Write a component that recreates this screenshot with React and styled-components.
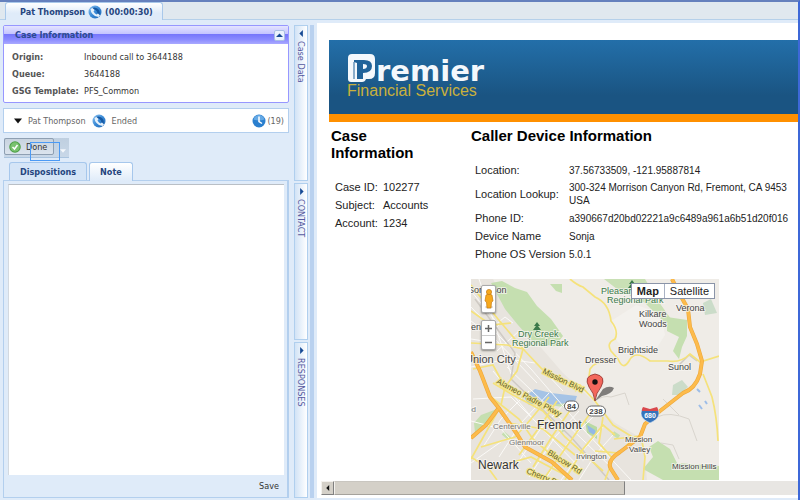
import * as React from "react";
import styled, { createGlobalStyle } from "styled-components";

const GlobalStyle = createGlobalStyle`
  * {
    box-sizing: border-box;
  }
  body {
    margin: 0;
    background: #dfebf9;
    font: 9px/12px "DejaVu Sans Condensed", "DejaVu Sans", sans-serif;
    color: #333333;
  }
  button, textarea {
    font: inherit;
    color: inherit;
    padding: 0;
    border: 0;
    margin: 0;
    background: transparent;
  }
  svg {
    display: block;
  }
`;

const Shell = styled.div`
  display: flex;
  flex-direction: column;
  min-height: 100vh;
  border-top: 2px solid #6580bd;
  border-right: 2px solid #3d68d8;
`;

const SessionBar = styled.header`
  height: 18px;
  padding-left: 5px;
  background: #e0e8ef;
  border-bottom: 1px solid #b5d0ea;
`;

const SessionTab = styled.button`
  display: flex;
  align-items: center;
  gap: 3px;
  height: 18px;
  padding: 0 9px 0 14px;
  border: 1px solid #a9c8ea;
  border-bottom: 0;
  border-radius: 3px 3px 0 0;
  background: linear-gradient(#ffffff, #dfebf9 60%);
  color: #26457f;
  font-weight: bold;
`;

const Workspace = styled.div`
  flex: 1;
  display: grid;
  grid-template-columns: 286px 14px 4px minmax(0, 1fr);
  padding: 5px 0 2px 3px;
`;

const Sidebar = styled.aside`
  display: flex;
  flex-direction: column;
`;

const CasePanel = styled.section`
  min-height: 78px;
  border: 1px solid #9797ff;
  border-radius: 2px;
  background: #ffffff;
`;

const CaseHeader = styled.div`
  display: flex;
  align-items: center;
  justify-content: space-between;
  height: 18px;
  padding: 0 3px 0 11px;
  background: linear-gradient(#e4e4ff, #c4c4ff 44%, #7676fb 46%, #8b8bff 75%, #a9a9ff);
`;

const PanelTitle = styled.h2`
  margin: 0;
  font: inherit;
  font-weight: bold;
  color: #2c4a90;
`;

const CollapseButton = styled.button`
  display: flex;
  align-items: center;
  justify-content: center;
  width: 11px;
  height: 11px;
  border: 1px solid #a9bfe4;
  border-radius: 2px;
  background: #eaf2fd;
`;

const CaseFields = styled.table`
  margin: 4px 0 0 8px;
  border-collapse: collapse;
  th {
    width: 72px;
    padding: 0;
    height: 17px;
    text-align: left;
    white-space: nowrap;
    color: #555555;
  }
  td {
    padding: 0;
  }
`;

const CallRow = styled.section`
  display: flex;
  align-items: center;
  gap: 6px;
  height: 25px;
  margin-top: 5px;
  padding: 0 4px 0 10px;
  border: 1px solid #b3cfee;
  background: #ffffff;
  color: #666666;
`;

const CallCount = styled.span`
  display: flex;
  align-items: center;
  gap: 1px;
  margin-left: auto;
`;

const Toolbar = styled.div`
  display: flex;
  align-self: flex-start;
  width: 65px;
  height: 20px;
  margin: 5px 0 0 1px;
  background: linear-gradient(#bfcfe0, #c9d8e8);
  border-bottom: 1px solid #aac4df;
`;

const DoneButton = styled.button`
  position: relative;
  display: flex;
  align-items: center;
  gap: 5px;
  width: 50px;
  height: 17px;
  padding-left: 4px;
  border: 1px solid #8e9fb2;
  border-radius: 2px;
  background: linear-gradient(#c8d3df, #dbe4ee);
  &::after {
    content: "";
    position: absolute;
    top: 3px;
    left: 25px;
    width: 28px;
    height: 17px;
    border: 1px solid #4b9af5;
  }
`;

const ToolbarMore = styled.button`
  align-self: flex-end;
  margin: 0 0 3px 6px;
`;

const TabStrip = styled.div`
  display: flex;
  align-items: flex-end;
  gap: 2px;
  height: 19px;
  margin: 4px 0 -1px;
  padding-left: 6px;
`;

const TabButton = styled.button`
  position: relative;
  height: ${(props) => (props.$active ? 19 : 18)}px;
  margin-bottom: ${(props) => (props.$active ? 0 : 1)}px;
  padding: 0 10px;
  border: 1px solid #a6c7ec;
  border-bottom: 0;
  border-radius: 3px 3px 0 0;
  background: ${(props) =>
    props.$active ? "linear-gradient(#ffffff, #dfebf9)" : "#d5e5f7"};
  color: #26457f;
  font-weight: bold;
`;

const NotePanel = styled.section`
  flex: 1;
  display: flex;
  flex-direction: column;
  padding: 3px 3px 1px 4px;
  border: 1px solid #b3cfee;
  border-width: 1px 2px 1px 1px;
`;

const NoteText = styled.textarea`
  flex: 1;
  width: 100%;
  resize: none;
  border-top: 1px solid #b9bfc6;
  border-left: 1px solid #d3d9e0;
  background: #ffffff;
`;

const SaveButton = styled.button`
  align-self: flex-end;
  height: 21px;
  padding: 0 5px;
`;

const Rail = styled.nav`
  display: grid;
  grid-template-rows: 1fr 1fr 1fr;
  gap: 2px;
  margin-left: 5px;
  width: 14px;
`;

const RailSection = styled.button`
  display: flex;
  flex-direction: column;
  align-items: center;
  gap: 4px;
  padding-top: 4px;
  border: 1px solid #b0cfee;
  background: linear-gradient(90deg, #d2e3f6, #ffffff);
  color: #55599f;
  span {
    writing-mode: vertical-rl;
    line-height: 10px;
  }
`;

const Splitter = styled.div`
  width: 4px;
  margin-left: 7px;
  background: #b9d1ef;
`;

const ContentPane = styled.main`
  display: flex;
  flex-direction: column;
  margin: -2px 0 0 10px;
  overflow: hidden;
  background: #ffffff;
  font-family: "Liberation Sans", Arial, sans-serif;
  color: #222222;
`;

const Banner = styled.div`
  height: 82px;
  margin: 17px 0 0 12px;
  padding: 14px 0 0 18px;
  background: linear-gradient(#236fa9, #1a5482 75%);
  border-bottom: 8px solid #ff9000;
`;

const Brand = styled.div`
  display: flex;
  align-items: flex-end;
  height: 29px;
  color: #f4f8fc;
  font: bold 29px/24px "DejaVu Sans", sans-serif;
  svg {
    align-self: flex-start;
  }
`;

const Tagline = styled.div`
  font-size: 16px;
  line-height: 15px;
  color: #c9b03c;
`;

const Details = styled.div`
  display: grid;
  grid-template-columns: 140px minmax(0, 1fr);
  padding: 5px 0 0 14px;
`;

const Heading = styled.h1`
  margin: 0;
  font-size: 15px;
  line-height: 17px;
  color: #000000;
`;

const InfoTable = styled.table`
  margin-top: 17px;
  border-collapse: collapse;
  white-space: nowrap;
  th {
    min-width: ${(props) => props.$label}px;
    height: 18px;
    padding: 0 0 0 4px;
    text-align: left;
    font-size: 11px;
    font-weight: normal;
  }
  td {
    padding: 2px 0;
    font-size: ${(props) => props.$size}px;
    line-height: 13px;
  }
`;

const MapFrame = styled.div`
  position: relative;
  width: 248px;
  margin-top: 16px;
`;

const MapControl = styled.div`
  position: absolute;
  top: ${(props) => props.$top}px;
  left: 10px;
  width: 15px;
  border: 1px solid #aaaaaa;
  border-radius: 2px;
  background: #ffffff;
  box-shadow: 0 1px 2px rgba(0, 0, 0, 0.4);
  button {
    display: flex;
    align-items: center;
    justify-content: center;
    width: 13px;
    height: ${(props) => props.$cell}px;
  }
  button + button {
    border-top: 1px solid #cccccc;
  }
`;

const MapTypes = styled.div`
  position: absolute;
  top: 4px;
  right: 4px;
  display: flex;
  border: 1px solid #8a94a8;
  background: #ffffff;
  font-size: 11px;
`;

const MapType = styled.button`
  height: 14px;
  padding: 0 5px;
  font-weight: ${(props) => (props.$active ? "bold" : "normal")};
  & + & {
    border-left: 1px solid #a9b2c4;
  }
`;

const Scroller = styled.div`
  display: flex;
  height: 14px;
  margin: auto 0 3px 4px;
  background: #e8e6e3;
`;

const ScrollArrow = styled.button`
  display: flex;
  align-items: center;
  justify-content: center;
  width: 13px;
  border: 1px solid #808080;
  border-color: #f4f2ee #808080 #808080 #f4f2ee;
  background: #d4d0c8;
`;

const ScrollThumb = styled.div`
  width: 61%;
  border: 1px solid #808080;
  border-color: #c9c6c0 #808080 #a5a29c #f4f2ee;
  background: #d4d0c8;
`;

const Triangle = ({ direction, size = 6, color = "#174a94" }) => {
  const shapes = {
    up: "M0 7L5 2L10 7Z",
    down: "M0 2L10 2L5 8Z",
    left: "M7 0L2 5L7 10Z",
    right: "M3 0L8 5L3 10Z",
  };
  return (
    <svg width={size} height={size} viewBox="0 0 10 10" aria-hidden="true">
      <path d={shapes[direction]} fill={color} />
    </svg>
  );
};

const PhoneIcon = () => (
  <svg width="14" height="14" viewBox="0 0 28 28" aria-hidden="true">
    <defs>
      <linearGradient id="ball" x1="0" y1="0" x2="1" y2="1">
        <stop offset="0" stopColor="#8fc4f0" />
        <stop offset="0.5" stopColor="#3a8ad6" />
        <stop offset="1" stopColor="#1b65b2" />
      </linearGradient>
    </defs>
    <circle cx="14" cy="14" r="13" fill="url(#ball)" />
    <path d="M8 6Q15 3 20 8Q25 13 23 20L19 17Q19 12 15 10Q11 9 8 6Z" fill="#1558a3" />
    <path d="M5 8L9 6L13 10L11 13Q13 17 17 19L20 17L24 21L21 24Q14 24 9 18Q5 13 5 8Z" fill="#e6f1fb" />
  </svg>
);

const ClockIcon = () => (
  <svg width="14" height="14" viewBox="0 0 28 28" aria-hidden="true">
    <circle cx="14" cy="14" r="13" fill="#2a7fce" />
    <path d="M3 11Q6 2 14 2Q22 2 25 11Q14 15 3 11Z" fill="#65a9e5" />
    <path d="M14 5V15L20 19" fill="none" stroke="#ffffff" strokeWidth="3" />
  </svg>
);

const CheckIcon = () => (
  <svg width="12" height="12" viewBox="0 0 24 24" aria-hidden="true">
    <circle cx="12" cy="12" r="11.5" fill="#4b9e45" />
    <circle cx="12" cy="12" r="9.5" fill="#79c26f" />
    <path d="M7 12L11 16L17 8" fill="none" stroke="#ffffff" strokeWidth="3" />
  </svg>
);

const PegmanIcon = () => (
  <svg width="10" height="22" viewBox="0 0 10 22" aria-hidden="true">
    <ellipse cx="5" cy="19" rx="4" ry="1.5" fill="#dddddd" />
    <path d="M2 7Q5 5 8 7L9 13L7.5 14L7 20H3L2.5 14L1 13Z" fill="#f7a91d" stroke="#c67b12" strokeWidth="0.7" />
    <circle cx="5" cy="4" r="2.6" fill="#f7a91d" stroke="#c67b12" strokeWidth="0.7" />
  </svg>
);

const ZoomIcon = ({ plus }) => (
  <svg width="7" height="7" viewBox="0 0 7 7" aria-hidden="true">
    <path d={plus ? "M0 3.5H7M3.5 0V7" : "M0 3.5H7"} stroke="#666666" strokeWidth="1.5" />
  </svg>
);

const BrandMark = () => (
  <svg width="29" height="28" viewBox="0 0 29 28" aria-hidden="true">
    <path d="M5 0H23Q28 0 28 5V19Q28 25 22 25H19Q18 28 15 28H4Q1 28 1 25V4Q1 0 5 0Z" fill="#f4f8fc" />
    <path d="M7 6H17Q25 6 25 12Q25 19 16 19V25H10V9L7 8Z" fill="#20639a" />
    <path d="M16 10Q20 10 20 12Q20 15 16 15Z" fill="#f4f8fc" />
    <path d="M7 8V25" stroke="#20639a" strokeWidth="1" />
  </svg>
);

const STREETS = [
  "M0 28L60 90L112 150L160 201",
  "M0 42L24 60L66 104",
  "M8 0L22 40L40 95",
  "M0 60L50 68L92 112",
  "M0 88L36 80L64 84",
  "M22 92L62 140L110 190",
  "M36 88L84 134L142 190",
  "M2 120L40 118L72 150",
  "M0 142L30 150L60 184",
  "M12 168L30 140L58 112",
  "M28 178L50 144L78 114",
  "M44 188L68 152L94 124",
  "M58 198L84 158L108 132",
  "M74 201L98 162L122 138",
  "M90 201L110 174L132 148",
  "M108 201L124 176L142 156",
  "M0 184L34 160L56 166",
  "M0 12L28 46L10 62",
  "M12 56L34 38L42 44",
  "M26 72L48 52",
];

const YELLOW_ROADS = [
  "M0 6L11 20L27 40L54 72L71 90L87 102L109 106L124 122L142 146L168 162",
  "M99 0Q106 6 112 8L124 18Q138 24 140 42Q148 52 144 60Q135 64 140 72L147 80Q152 92 158 82Q164 70 179 82L197 82Q210 84 219 75L229 83L248 77",
  "M118 98L119 90Q124 82 138 82",
  "M232 95Q238 110 241 118Q246 138 247 162",
  "M0 64L36 66L52 70L46 92L34 108L30 126",
  "M22 104L42 116L72 132L94 158L132 192",
  "M20 118L48 140L62 160L94 188",
  "M28 130L0 180",
  "M38 144L72 150L104 176",
  "M10 168L44 158L60 140L78 118",
  "M48 176L70 146L86 122",
  "M62 188L82 156L100 130",
  "M72 201L98 164L118 136",
  "M94 201L112 170L132 146L144 156",
  "M0 178L18 190L26 201M18 190L60 178L94 196",
  "M132 138L128 164L142 180L134 201",
  "M143 160L170 157L174 178L172 201",
  "M124 172L148 174L162 160",
  "M0 32L20 46L40 44M2 90L22 86L34 108",
];

const ORANGE_ROADS = [
  "M0 73L9 92L19 118L27 128L46 155L54 168L81 183L101 201",
  "M27 130L15 146L0 159",
  "M201 0L207 12L217 30L219 48L226 65L231 82L229 95Q224 110 212 114L189 132L174 145L169 158L149 173Q135 182 140 190L147 201",
];

// x, y, size, fill, text
const PLACES = [
  [-3, 14, 9, "#444444", "Sorenson"],
  [-5, 51, 9, "#444444", "pen"],
  [47, 58, 9, "#3b7a4a", "Dry Creek"],
  [41, 67, 9, "#3b7a4a", "Regional Park"],
  [-6, 84, 11, "#444444", "Union City"],
  [130, 15, 9, "#3b7a4a", "Pleasanton"],
  [136, 24, 9, "#3b7a4a", "Regional Park"],
  [205, 32, 9, "#444444", "Verona"],
  [168, 38, 9, "#444444", "Kilkare"],
  [168, 48, 9, "#444444", "Woods"],
  [147, 74, 9, "#444444", "Brightside"],
  [114, 84, 9, "#444444", "Dresser"],
  [197, 91, 9, "#444444", "Sunol"],
  [22, 150, 8, "#777777", "Centerville"],
  [38, 166, 8, "#777777", "Glenmoor"],
  [66, 150, 12, "#333333", "Fremont"],
  [7, 190, 12, "#333333", "Newark"],
  [105, 180, 8, "#555555", "Irvington"],
  [154, 163, 8, "#444444", "Mission"],
  [158, 173, 8, "#444444", "Valley"],
  [201, 190, 8, "#444444", "Mission Hills"],
  [-4, 133, 8, "#777777", "od"],
];

const ROAD_NAMES = [
  [71, 94, 26, "Mission Blvd"],
  [25, 104, 28, "Alameo Padre Pkwy"],
  [76, 175, 32, "Blacow Rd"],
  [55, 194, 22, "Cherry St"],
];

const StreetMap = () => (
  <svg
    width="100%"
    viewBox="0 0 248 201"
    role="img"
    aria-label="Street map of Fremont"
    fontFamily="Liberation Sans, Arial, sans-serif"
    fill="none"
  >
    <rect width="248" height="201" fill="#efece7" />
    <path d="M0 0H22L40 34L92 94L120 120L144 144L172 160L176 201H0Z" fill="#e8e4de" />
    <path d="M140 42L165 26L190 34L194 56L184 72L158 74L146 62Z" fill="#f3f1ed" />
    <path d="M20 4L31 2L44 9L56 13L66 27L80 40L92 57L84 67L64 65L47 46L34 30Z" fill="#c5dfb0" />
    <path d="M79 5L91 5V14L85 12Z" fill="#c5dfb0" />
    <path d="M133 0H174L190 26L200 40L194 44L174 24L146 10Z" fill="#c9e0b5" />
    <path d="M196 38L216 41V57L211 68L208 80L202 72L208 58L196 52Z" fill="#c5dfb0" />
    <path d="M232 24L240 20L246 34L234 36Z" fill="#cbdcc9" />
    <path d="M202 106L211 101L217 108L208 116L201 116Z" fill="#cbdcc9" />
    <path d="M187 162L199 170L206 184L248 187V201H192L172 190L182 178L178 168Z" fill="#c5dfb0" />
    <path d="M3 144L10 136L26 130L22 142L4 154Z" fill="#c5dfb0" />
    <path d="M114 142L126 148V160L116 154Z" fill="#b9d9a3" />
    <path d="M72 125L92 116L104 122L92 128Z" fill="#c5dfb0" />
    <path d="M53 118L64 110L80 114L106 117L104 123L80 126L68 124L58 126Z" fill="#a5c3e6" />
    <path d="M116 146L124 151L125 157L118 153Z" fill="#93b8e6" />
    <path d="M226 110l3 3M228 126l3 4M234 122l2 3" stroke="#9dbde8" strokeWidth="2" />
    <path d="M32 154l7 6M88 148l5 4M142 154l6 4" stroke="#c5dfb0" strokeWidth="4" />
    <path d="M124 122Q132 116 140 118L154 114L158 126M186 138Q198 132 218 140L226 162M190 164L202 166L208 180M192 120L208 136" stroke="#d9d5ce" strokeWidth="1" />
    {STREETS.map((d) => (
      <path key={d} d={d} stroke="#fbfaf8" strokeWidth="1" />
    ))}
    <path d="M4 20L44 74L40 100L100 158L138 201M208 86L218 76L226 82" stroke="#cfcac4" strokeWidth="1.5" />
    {YELLOW_ROADS.map((d) => (
      <path key={d} d={d} stroke="#f5e27b" strokeWidth="1.7" />
    ))}
    {ORANGE_ROADS.map((d) => (
      <g key={d} strokeLinejoin="round">
        <path d={d} stroke="#eda83c" strokeWidth="4" />
        <path d={d} stroke="#fdbb4b" strokeWidth="2.8" />
      </g>
    ))}
    <path d="M66 43l3 4h-2l3 4h-3v2h-2v-2h-3l3-4h-2ZM161 1l3 4h-2l3 4h-8l3-4h-2Z" fill="#3b7a4a" />
    <g stroke="#f7f5f1" strokeWidth="2" strokeOpacity="0.75" paintOrder="stroke">
      {PLACES.map(([x, y, size, fill, text]) => (
        <text key={text + y} x={x} y={y} fontSize={size} fill={fill}>
          {text}
        </text>
      ))}
    </g>
    <g fontSize="8" fill="#5f5c2c" stroke="#f5e78d" strokeWidth="2" paintOrder="stroke">
      {ROAD_NAMES.map(([x, y, angle, text]) => (
        <text key={text} x={x} y={y} transform={`rotate(${angle} ${x} ${y})`}>
          {text}
        </text>
      ))}
    </g>
    <g fontSize="8" fontWeight="bold" textAnchor="middle">
      <rect x="93.5" y="122" width="14" height="10" rx="5" fill="#ffffff" stroke="#666666" />
      <text x="100.5" y="130" fill="#444444">84</text>
      <rect x="115.5" y="127" width="19" height="10" rx="5" fill="#ffffff" stroke="#666666" />
      <text x="125" y="135" fill="#444444">238</text>
      <path d="M171 130L187 130Q191 139 179 144Q167 139 171 130Z" fill="#3573ba" stroke="#ffffff" strokeWidth="0.5" />
      <path d="M171 130L172 128L179 130L186 128L187 130V132H171Z" fill="#d9494d" />
      <text x="179" y="139" fontSize="7" fill="#ffffff">680</text>
    </g>
    <path d="M124 122L132 110Q138 106 143 109Q141 115 131 117Z" fill="#333333" fillOpacity="0.6" />
    <path d="M124 122Q123 114 118 108Q112 97 124 95Q136 97 130 108Q125 114 124 122Z" fill="#f3675c" stroke="#8d302b" strokeWidth="0.8" />
    <circle cx="124" cy="103" r="2.7" fill="#111111" />
  </svg>
);

const CASE_FIELDS = [
  ["Origin:", "Inbound call to 3644188"],
  ["Queue:", "3644188"],
  ["GSG Template:", "PFS_Common"],
];

const CASE_INFO = [
  ["Case ID:", "102277"],
  ["Subject:", "Accounts"],
  ["Account:", "1234"],
];

const DEVICE_INFO = [
  ["Location:", "37.56733509, -121.95887814"],
  ["Location Lookup:", "300-324 Morrison Canyon Rd, Fremont, CA 9453", "USA"],
  ["Phone ID:", "a390667d20bd02221a9c6489a961a6b51d20f016"],
  ["Device Name", "Sonja"],
  ["Phone OS Version", "5.0.1"],
];

const Rows = ({ rows }) => (
  <tbody>
    {rows.map(([label, value, extra]) => (
      <tr key={label}>
        <th scope="row">{label}</th>
        <td>
          {value}
          {extra && <br />}
          {extra}
        </td>
      </tr>
    ))}
  </tbody>
);

const CaseSidebar = () => {
  const [tab, setTab] = React.useState("Note");
  const [note, setNote] = React.useState("");

  return (
    <Sidebar>
      <CasePanel>
        <CaseHeader>
          <PanelTitle>Case Information</PanelTitle>
          <CollapseButton type="button" aria-label="Collapse">
            <Triangle direction="up" size={7} />
          </CollapseButton>
        </CaseHeader>
        <CaseFields>
          <Rows rows={CASE_FIELDS} />
        </CaseFields>
      </CasePanel>
      <CallRow>
        <Triangle direction="down" size={8} color="#111111" />
        <span>Pat Thompson</span>
        <PhoneIcon />
        <span>Ended</span>
        <CallCount>
          <ClockIcon />
          (19)
        </CallCount>
      </CallRow>
      <Toolbar>
        <DoneButton type="button">
          <CheckIcon />
          Done
        </DoneButton>
        <ToolbarMore type="button" aria-label="More actions">
          <Triangle direction="down" color="#f5f8fc" />
        </ToolbarMore>
      </Toolbar>
      <TabStrip role="tablist">
        {["Dispositions", "Note"].map((name) => (
          <TabButton
            key={name}
            type="button"
            role="tab"
            aria-selected={tab === name}
            $active={tab === name}
            onClick={() => setTab(name)}
          >
            {name}
          </TabButton>
        ))}
      </TabStrip>
      <NotePanel>
        <NoteText
          aria-label="Note"
          value={note}
          onChange={(event) => setNote(event.target.value)}
        />
        <SaveButton type="button">Save</SaveButton>
      </NotePanel>
    </Sidebar>
  );
};

const CallerMap = () => (
  <MapFrame>
    <StreetMap />
    <MapControl $top={6} $cell={26}>
      <button type="button" aria-label="Street view">
        <PegmanIcon />
      </button>
    </MapControl>
    <MapControl $top={41} $cell={14}>
      <button type="button" aria-label="Zoom in">
        <ZoomIcon plus />
      </button>
      <button type="button" aria-label="Zoom out">
        <ZoomIcon />
      </button>
    </MapControl>
    <MapTypes>
      <MapType type="button" $active>
        Map
      </MapType>
      <MapType type="button">Satellite</MapType>
    </MapTypes>
  </MapFrame>
);

const App = () => (
  <Shell>
    <GlobalStyle />
    <SessionBar>
      <SessionTab type="button">
        Pat Thompson
        <PhoneIcon />
        (00:00:30)
      </SessionTab>
    </SessionBar>
    <Workspace>
      <CaseSidebar />
      <Rail>
        {["Case Data", "CONTACT", "RESPONSES"].map((name, index) => (
          <RailSection key={name} type="button">
            <Triangle direction={index === 0 ? "left" : "right"} size={7} />
            <span>{name}</span>
          </RailSection>
        ))}
      </Rail>
      <Splitter />
      <ContentPane>
        <Banner>
          <Brand>
            <BrandMark />
            remier
          </Brand>
          <Tagline>Financial Services</Tagline>
        </Banner>
        <Details>
          <section>
            <Heading>
              Case
              <br />
              Information
            </Heading>
            <InfoTable $label={52} $size={11}>
              <Rows rows={CASE_INFO} />
            </InfoTable>
          </section>
          <section>
            <Heading>Caller Device Information</Heading>
            <InfoTable $label={98} $size={10}>
              <Rows rows={DEVICE_INFO} />
            </InfoTable>
            <CallerMap />
          </section>
        </Details>
        <Scroller>
          <ScrollArrow type="button" aria-label="Scroll left">
            <Triangle direction="left" color="#111111" />
          </ScrollArrow>
          <ScrollThumb />
        </Scroller>
      </ContentPane>
    </Workspace>
  </Shell>
);

export default App;
